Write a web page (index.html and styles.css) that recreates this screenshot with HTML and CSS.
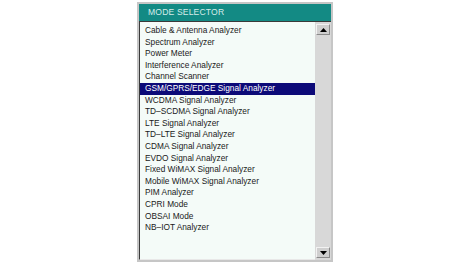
FILE: index.html
```html
<!DOCTYPE html>
<html lang="en">
<head>
  <meta charset="UTF-8" />
  <title>Mode Selector</title>
  <link rel="stylesheet" href="styles.css">
</head>
<body>
  <div class="panel">
    <div class="title">MODE SELECTOR</div>

    <div class="content">
      <ul class="mode-list">
        <li>Cable &amp; Antenna Analyzer</li>
        <li>Spectrum Analyzer</li>
        <li>Power Meter</li>
        <li>Interference Analyzer</li>
        <li>Channel Scanner</li>
        <li class="selected">GSM/GPRS/EDGE Signal Analyzer</li>
        <li>WCDMA Signal Analyzer</li>
        <li>TD&#8211;SCDMA Signal Analyzer</li>
        <li>LTE Signal Analyzer</li>
        <li>TD&#8211;LTE Signal Analyzer</li>
        <li>CDMA Signal Analyzer</li>
        <li>EVDO Signal Analyzer</li>
        <li>Fixed WiMAX Signal Analyzer</li>
        <li>Mobile WiMAX Signal Analyzer</li>
        <li>PIM Analyzer</li>
        <li>CPRI Mode</li>
        <li>OBSAI Mode</li>
        <li>NB&#8211;IOT Analyzer</li>
      </ul>

      <div class="scrollbar">
        <div class="scroll-btn">
          <svg width="7" height="4" viewBox="0 0 7 4"><path d="M3.5 0 L7 4 L0 4 Z" fill="#000"/></svg>
        </div>
        <div class="scroll-btn">
          <svg width="7" height="4" viewBox="0 0 7 4"><path d="M0 0 L7 0 L3.5 4 Z" fill="#000"/></svg>
        </div>
      </div>
    </div>
  </div>
</body>
</html>
```

FILE: styles.css
```css
body {
  margin: 0;
  background: #ffffff;
  font-family: "Liberation Sans", Arial, sans-serif;
}

.panel {
  width: 192px;
  height: 256px;
  margin: 2px auto 0;
  border: 2px solid #c6c6c6;
  display: flex;
  flex-direction: column;
  background: #c6c6c6;
}

.title {
  height: 17px;
  line-height: 17px;
  background: #138a84;
  color: #d6ece9;
  font-size: 8.6px;
  letter-spacing: 0.15px;
  padding-left: 9px;
}

.content {
  flex: 1;
  display: flex;
  min-height: 0;
}

.mode-list {
  flex: 1;
  list-style: none;
  margin: 0;
  padding: 3px 0 0;
  background: #f4fbf8;
  border-top: 1px solid #3a3a3a;
  border-left: 1px solid #3a3a3a;
  border-bottom: 1px solid #e8e8e8;
}

.mode-list li {
  height: 11.6px;
  line-height: 11.6px;
  padding-left: 5px;
  font-size: 8.3px;
  color: #1a1a1a;
  white-space: nowrap;
}

.mode-list li.selected {
  background: #0c0a78;
  color: #ffffff;
}

.scrollbar {
  width: 14px;
  background: #d8d8d8;
  border-top: 1px solid #3a3a3a;
  display: flex;
  flex-direction: column;
  justify-content: space-between;
  padding: 2px 1px 2px 1px;
}

.scroll-btn {
  height: 9px;
  background: #cfcfcf;
  border-top: 1px solid #f2f2f2;
  border-left: 1px solid #f2f2f2;
  border-right: 1px solid #8a8a8a;
  border-bottom: 1px solid #8a8a8a;
  display: flex;
  align-items: center;
  justify-content: center;
}
```
